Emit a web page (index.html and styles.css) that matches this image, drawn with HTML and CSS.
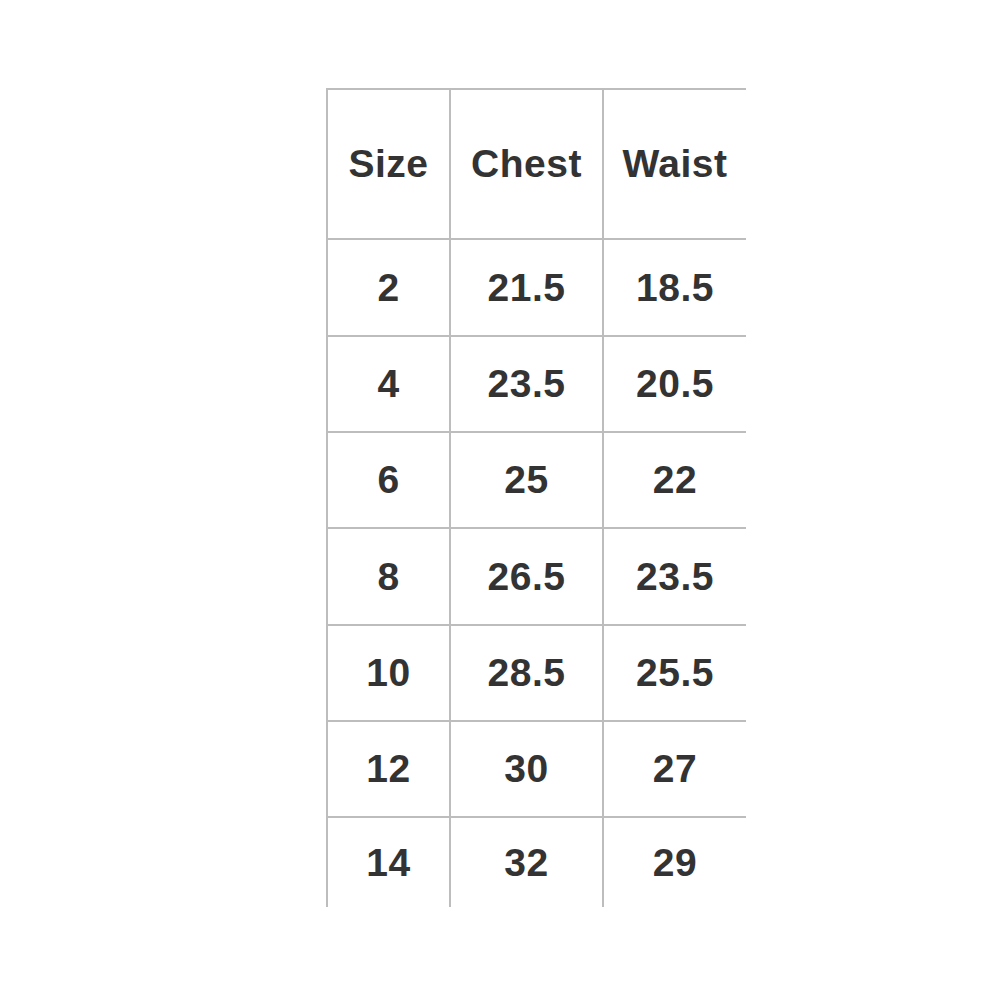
FILE: index.html
```html
<!DOCTYPE html>
<html>
<head>
<meta charset="utf-8">
<link rel="stylesheet" href="styles.css">
</head>
<body>
<div class="page">
  <div class="chart">
    <div class="cell head">Size</div><div class="cell head">Chest</div><div class="cell head">Waist</div>
    <div class="cell">2</div><div class="cell">21.5</div><div class="cell">18.5</div>
    <div class="cell">4</div><div class="cell">23.5</div><div class="cell">20.5</div>
    <div class="cell">6</div><div class="cell">25</div><div class="cell">22</div>
    <div class="cell">8</div><div class="cell">26.5</div><div class="cell">23.5</div>
    <div class="cell">10</div><div class="cell">28.5</div><div class="cell">25.5</div>
    <div class="cell">12</div><div class="cell">30</div><div class="cell">27</div>
    <div class="cell">14</div><div class="cell">32</div><div class="cell">29</div>
  </div>
</div>
</body>
</html>
```
FILE: styles.css
```css
html, body {
  margin: 0;
  padding: 0;
  background: #ffffff;
}
.page {
  width: 1000px;
  height: 1000px;
  padding: 88px 0 0 326px;
  box-sizing: border-box;
}
.chart {
  display: grid;
  grid-template-columns: 121px 151px 142px;
  grid-template-rows: 148px 95px 94px 94px 95px 94px 94px 89px;
  gap: 2px;
  padding: 2px 0 0 2px;
  width: 420px;
  box-sizing: border-box;
  background: #bdbdbd;
  font-family: "Liberation Sans", Arial, sans-serif;
  font-weight: bold;
  font-size: 39px;
  color: #333333;
  letter-spacing: 0.5px;
}
.cell {
  background: #ffffff;
  display: flex;
  align-items: center;
  justify-content: center;
}
```
